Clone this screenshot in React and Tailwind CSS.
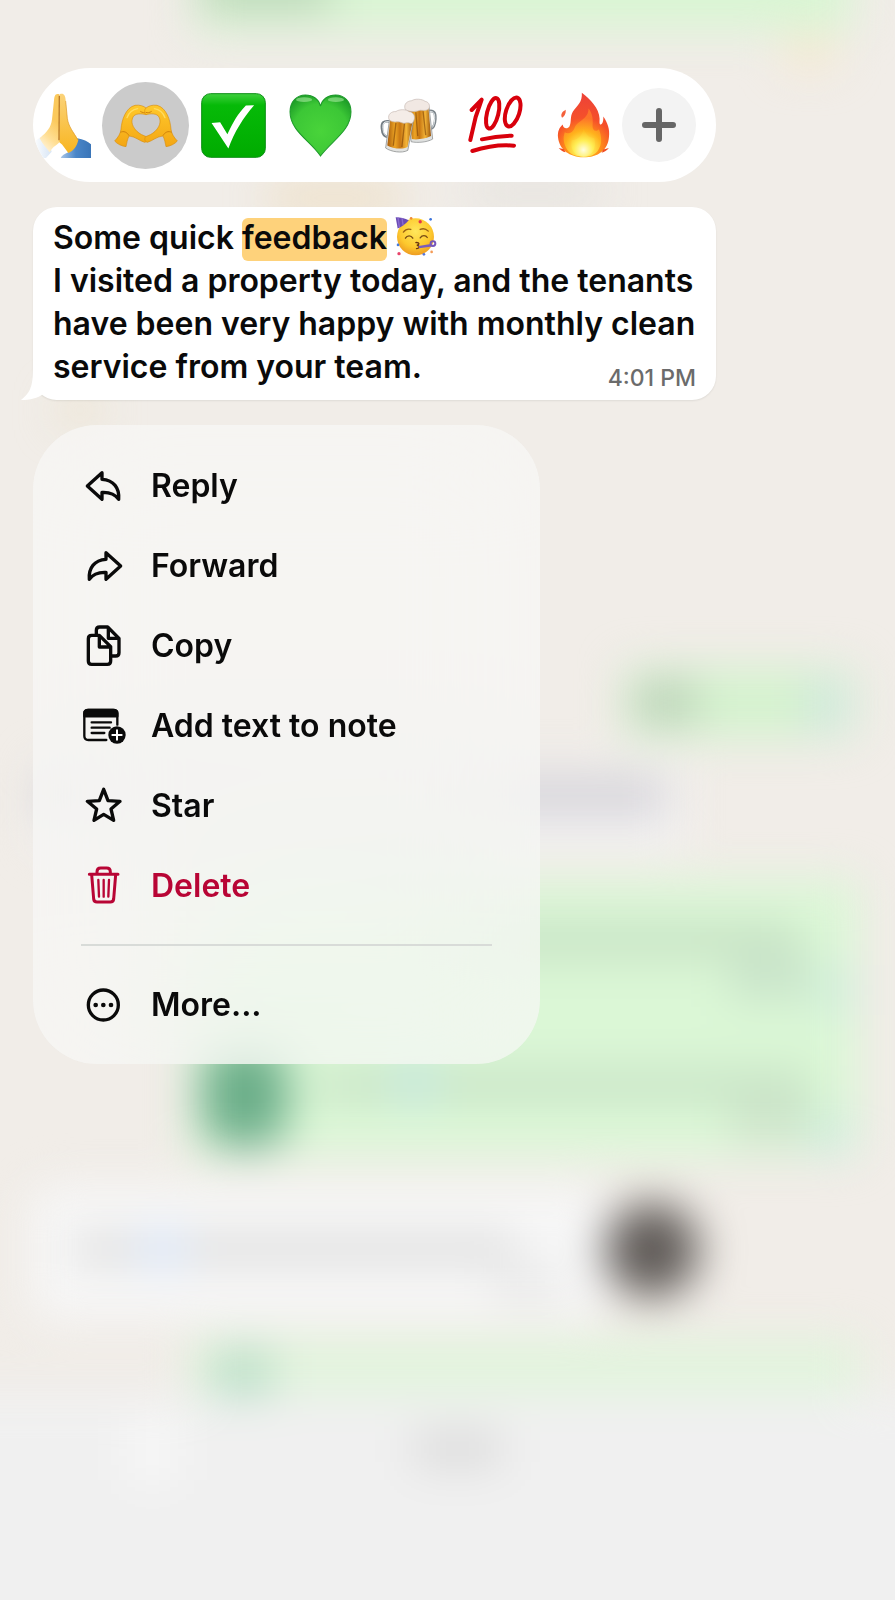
function PrayIcon() {
  return (
    <svg viewBox="39 96 174 195" className="h-[65px] w-[58px]" aria-hidden="true">
      <defs>
        <linearGradient id="praySkin" gradientUnits="userSpaceOnUse" x1="50" x2="119" y1="262" y2="190">
          <stop offset="0" stopColor="#fffaf0" />
          <stop offset="0.5" stopColor="#ffdf95" />
          <stop offset="1" stopColor="#fbc95c" />
        </linearGradient>
        <linearGradient id="praySkinRight" x1="0" x2="0" y1="0" y2="1">
          <stop offset="0" stopColor="#fbd37a" />
          <stop offset="1" stopColor="#f8b51f" />
        </linearGradient>
        <linearGradient id="praySleeve" x1="0" x2="1" y1="0" y2="0">
          <stop offset="0" stopColor="#a9c6e8" />
          <stop offset="0.5" stopColor="#4a86c8" />
          <stop offset="1" stopColor="#3a75b8" />
        </linearGradient>
        <linearGradient id="praySleeveFade" x1="0" x2="1" y1="0" y2="0">
          <stop offset="0" stopColor="#ffffff" />
          <stop offset="1" stopColor="#d7e5f5" />
        </linearGradient>
      </defs>
      <path d="M39 245 L62 228 C80 242 92 260 95 272 L78 291 L48 291 Z" fill="url(#praySleeveFade)" />
      <path d="M172 232 C190 236 203 241 213 250 V291 H122 C125 283 134 279 145 274 Z" fill="url(#praySleeve)" />
      <path d="M118 100 C106 95 103 105 102 118 L96 175 C93 200 82 212 59 232 C68 250 80 262 89 274 C99 254 112 253 119 242 Z" fill="url(#praySkin)" />
      <path d="M119 100 C131 95 136 104 137 118 L142 170 C145 195 157 208 175 236 C171 255 161 269 145 276 C137 267 130 252 118 244 Z" fill="url(#praySkinRight)" />
      <path d="M118 104 L117 238" stroke="#b97a26" strokeWidth="4" />
      <path d="M137 120 L142 172 C146 198 160 212 174 238" fill="none" stroke="#dd9a2c" strokeWidth="2" />
    </svg>
  )
}

function HeartHandsIcon() {
  const hand =
    'M283 238 C294 226 300 217 302 203 C304 175 316 138 344 131 C358 129 370 133 377 139 C383 145 382 154 377 159 C362 155 344 155 338 166 C330 182 338 197 350 209 C358 217 368 221 378 225 C383 231 381 240 373 242 C358 238 344 224 326 223 C321 233 319 245 317 255 C303 253 291 247 283 238 Z'
  return (
    <svg viewBox="281 127 192 129" className="h-[43px] w-[64px]" aria-hidden="true">
      <defs>
        <linearGradient id="handSkin" x1="0" x2="0" y1="0" y2="1">
          <stop offset="0" stopColor="#ffc92b" />
          <stop offset="1" stopColor="#f3a614" />
        </linearGradient>
      </defs>
      {['', 'translate(754 0) scale(-1 1)'].map((transform) => (
        <g key={transform} transform={transform}>
          <path d={hand} fill="url(#handSkin)" stroke="#d98f12" strokeWidth="2" />
          <path d="M320 168 C326 152 338 143 352 141" fill="none" stroke="#ffdc60" strokeWidth="4" strokeLinecap="round" />
          <path d="M300 212 C310 207 320 211 326 222 M360 149 C366 153 372 154 378 152" fill="none" stroke="#cf820c" strokeWidth="3" />
        </g>
      ))}
    </svg>
  )
}

function CheckIcon() {
  return (
    <svg viewBox="542 95 197 197" className="size-[65px]" aria-hidden="true">
      <defs>
        <linearGradient id="checkFill" x1="0" x2="0" y1="0" y2="1">
          <stop offset="0" stopColor="#3fd03e" />
          <stop offset="0.18" stopColor="#06ba08" />
          <stop offset="1" stopColor="#00ab00" />
        </linearGradient>
      </defs>
      <rect x="544" y="97" width="193" height="193" rx="27" fill="url(#checkFill)" stroke="#0b8f14" strokeWidth="3" />
      <path d="M574 186 L600 184 L622 220 C638 187 653 158 678 133 L703 132 C670 170 643 213 625 263 Z" fill="#fff" />
    </svg>
  )
}

function GreenHeartIcon() {
  return (
    <svg viewBox="808 102 188 188" className="size-[63px]" aria-hidden="true">
      <defs>
        <radialGradient id="heartFill" cx="0.5" cy="0.6" r="0.65">
          <stop offset="0" stopColor="#49d43a" />
          <stop offset="0.7" stopColor="#3cc736" />
          <stop offset="1" stopColor="#1f9f28" />
        </radialGradient>
      </defs>
      <path d="M902 287 C872 242 811 212 811 155 C811 125 831 105 857 105 C880 105 897 118 902 138 C907 118 924 105 947 105 C973 105 993 125 993 155 C993 212 934 242 902 287 Z" fill="url(#heartFill)" stroke="#1e9a2b" strokeWidth="3" />
      <ellipse cx="853" cy="119" rx="24" ry="7" fill="#a5ea9c" opacity="0.6" />
      <ellipse cx="948" cy="119" rx="24" ry="7" fill="#a5ea9c" opacity="0.6" />
    </svg>
  )
}

function BeersIcon() {
  return (
    <svg viewBox="28 112 172 166" className="h-[55px] w-[57px]" aria-hidden="true">
      <defs>
        <linearGradient id="beerFill" x1="0" x2="1" y1="0" y2="0">
          <stop offset="0" stopColor="#a85c0c" />
          <stop offset="0.3" stopColor="#eda424" />
          <stop offset="0.5" stopColor="#c87612" />
          <stop offset="0.75" stopColor="#f3b437" />
          <stop offset="1" stopColor="#9a530a" />
        </linearGradient>
      </defs>
      {/* back mug */}
      <path d="M174 152 C190 148 196 156 195 175 C194 195 190 203 180 205" fill="none" stroke="#7d868c" strokeWidth="8" />
      <path d="M174 153 C189 150 194 158 193 175 C192 193 188 202 180 204" fill="none" stroke="#e9edef" strokeWidth="3" />
      <path d="M110 142 L176 138 L187 236 C170 246 140 248 122 244 Z" fill="#dfe1e0" stroke="#7f8284" strokeWidth="2" />
      <path d="M112 142 L174 139 L182 227 C165 235 140 239 124 236 Z" fill="url(#beerFill)" />
      <path d="M136 155 L142 227 M158 152 L166 224" stroke="#7d4206" strokeWidth="4" opacity="0.6" />
      <path d="M104 147 C98 128 112 121 124 120 C134 113 156 115 164 122 C178 124 181 140 173 147 C162 153 151 146 142 151 C128 155 112 152 104 147 Z" fill="#f1e8e3" stroke="#c6b8b1" strokeWidth="2" />
      {/* front mug */}
      <path d="M58 183 C38 179 32 188 34 204 C35 221 41 229 53 229" fill="none" stroke="#747d84" strokeWidth="8" />
      <path d="M58 184 C40 181 35 189 37 204 C38 219 43 227 53 228" fill="none" stroke="#e9edef" strokeWidth="3" />
      <path d="M57 174 L129 180 L112 270 C94 280 60 274 45 263 Z" fill="#e2e3e1" stroke="#797c7d" strokeWidth="2" />
      <path d="M59 176 L127 181 L111 260 C93 269 64 263 50 255 Z" fill="url(#beerFill)" />
      <path d="M76 187 L68 256 M102 188 L94 260" stroke="#7d4206" strokeWidth="4" opacity="0.6" />
      <path d="M55 177 C50 160 64 152 76 153 C86 145 108 146 115 153 C132 155 136 172 128 184 C122 194 118 184 107 187 C98 192 90 182 80 184 C69 185 60 183 55 177 Z" fill="#f4ece7" stroke="#c6b8b1" strokeWidth="2" />
    </svg>
  )
}

function HundredIcon() {
  return (
    <svg viewBox="296 106 168 178" className="h-[60px] w-[56px]" fill="none" stroke="#d8000c" strokeLinecap="round" aria-hidden="true">
      <polyline points="307,150 337,119 319,171 303,240" strokeWidth="12" strokeLinejoin="round" />
      <ellipse cx="370" cy="160" rx="17" ry="47" strokeWidth="12" transform="rotate(14 370 160)" />
      <ellipse cx="430" cy="156" rx="20" ry="45" strokeWidth="12" transform="rotate(18 430 156)" />
      <path d="M338 238 C365 232 400 228 427 227" strokeWidth="12" />
      <path d="M309 273 C350 260 400 254 434 257" strokeWidth="12" />
    </svg>
  )
}

function FireIcon() {
  return (
    <svg viewBox="561 95 158 197" className="h-[66px] w-[53px]" aria-hidden="true">
      <defs>
        <radialGradient id="fireOuter" gradientUnits="userSpaceOnUse" cx="640" cy="262" r="150">
          <stop offset="0" stopColor="#ffd21c" />
          <stop offset="0.35" stopColor="#ff8a1a" />
          <stop offset="0.6" stopColor="#f5502a" />
          <stop offset="1" stopColor="#ee4436" />
        </radialGradient>
        <radialGradient id="fireInner" gradientUnits="userSpaceOnUse" cx="640" cy="268" r="95">
          <stop offset="0" stopColor="#fffde0" />
          <stop offset="0.3" stopColor="#ffee55" />
          <stop offset="0.6" stopColor="#ffb91d" />
          <stop offset="1" stopColor="#ff7a29" />
        </radialGradient>
      </defs>
      <path d="M635 97 C660 116 687 143 688 174 C688 185 687 192 691 192 C697 192 700 180 699 168 C712 186 719 207 716 229 C713 268 684 290 640 290 C598 290 568 267 564 231 C562 213 568 201 578 192 C578 204 592 207 598 198 C605 184 599 169 608 154 C621 135 637 126 635 97 Z" fill="url(#fireOuter)" />
      <path d="M587 148 C574 155 571 164 576 172 C583 168 588 160 587 148 Z" fill="#f4603a" />
      <path d="M566 262 C572 269 578 273 586 275 L582 266 Z M716 262 C709 270 703 274 694 276 L699 267 Z" fill="#ef4e25" />
      <path d="M655 144 C668 160 669 180 667 196 C667 212 678 215 686 206 C694 225 697 250 683 270 C673 283 659 288 640 288 C618 288 602 282 592 268 C580 250 578 232 584 215 C595 222 608 216 613 203 C620 180 655 178 655 144 Z" fill="url(#fireInner)" opacity="0.85" />
      <path d="M640 206 C650 224 655 231 672 232 C680 260 667 286 640 288 C612 287 599 262 605 238 C620 240 636 226 640 206 Z" fill="url(#fireInner)" />
    </svg>
  )
}

function PartyFace() {
  return (
    <svg viewBox="58 38 123 116" className="-mt-2 inline-block h-[39px] w-[42px] align-middle" role="img" aria-label="Partying face">
      <defs>
        <radialGradient id="partyFill" cx="0.5" cy="0.35" r="0.65">
          <stop offset="0" stopColor="#ffe75c" />
          <stop offset="0.65" stopColor="#fdc92e" />
          <stop offset="1" stopColor="#ee9c22" />
        </radialGradient>
      </defs>
      <circle cx="118" cy="97" r="55" fill="url(#partyFill)" />
      <path d="M59 39 C73 39 87 42 98 48 C90 58 77 68 65 72 Z" fill="#6b4bb5" />
      <path d="M66 40 L70 68 M78 41 L81 62" stroke="#8a6cd0" strokeWidth="4" />
      <path d="M82 83 C88 75 97 73 104 75 M132 75 C141 71 150 74 156 80" fill="none" stroke="#9a6315" strokeWidth="4" strokeLinecap="round" />
      <path d="M88 101 C93 92 105 92 110 101 M132 100 C138 91 149 92 153 99" fill="none" stroke="#7a4d14" strokeWidth="4" strokeLinecap="round" />
      <path d="M119 114 C130 113 131 120 122 122 C132 123 131 132 121 132" fill="none" stroke="#6a3610" strokeWidth="4" strokeLinecap="round" />
      <path d="M127 124 L164 118 L167 126 L129 131 Z" fill="#7a5bbd" />
      <circle cx="170" cy="117" r="7" fill="none" stroke="#7658bb" strokeWidth="6" />
      <circle cx="132" cy="52" r="5" fill="#e5354b" />
      <circle cx="163" cy="45" r="4" fill="#3c74dc" />
      <circle cx="69" cy="147" r="5" fill="#e8446b" />
      <circle cx="66" cy="121" r="4" fill="#467be0" />
      <circle cx="143" cy="149" r="4" fill="#5876d8" />
      <circle cx="166" cy="142" r="4" fill="#f49b56" />
      <circle cx="105" cy="42" r="4" fill="#f08c34" />
    </svg>
  )
}

const reactions = [
  { label: 'Heart hands', icon: <HeartHandsIcon />, selected: true },
  { label: 'Check mark', icon: <CheckIcon /> },
  { label: 'Green heart', icon: <GreenHeartIcon /> },
  { label: 'Beers', icon: <BeersIcon /> },
  { label: 'Hundred points', icon: <HundredIcon /> },
  { label: 'Fire', icon: <FireIcon /> }
]

function ReactionBar() {
  return (
    <div className="flex h-[114px] w-full max-w-[683px] items-center overflow-hidden rounded-full bg-white pr-5">
      <button type="button" aria-label="Folded hands" className="w-[69px] shrink-0">
        <PrayIcon />
      </button>
      <div className="flex min-w-0 flex-1">
        {reactions.map(({ label, icon, selected }) => (
          <div key={label} className="flex flex-1 justify-center">
            <button
              type="button"
              aria-label={label}
              aria-pressed={!!selected}
              className={`flex size-[87px] shrink-0 items-center justify-center rounded-full ${selected ? 'bg-[#cbcbcb]' : ''}`}
            >
              {icon}
            </button>
          </div>
        ))}
      </div>
      <button type="button" aria-label="More reactions" className="-ml-[5px] flex size-[74px] shrink-0 items-center justify-center rounded-full bg-[#f3f3f3]">
        <svg viewBox="0 0 36 36" className="size-9" stroke="#666" strokeWidth="6" strokeLinecap="round" aria-hidden="true">
          <path d="M18 4 V32 M4 18 H32" />
        </svg>
      </button>
    </div>
  )
}

function MessageBubble() {
  return (
    <article className="relative mt-[25px] w-full max-w-[683px] rounded-[24px] bg-white px-5 pt-[9px] pb-3 shadow-[0_1px_2px_rgba(0,0,0,0.08)]">
      <svg viewBox="0 0 36 40" className="absolute bottom-0 -left-3 h-10 w-9" fill="#fff" aria-hidden="true">
        <path d="M12 0 C12 22 12 31 0 40 C9 40 17 38 22 34 L36 40 V0 Z" />
      </svg>
      <p className="relative text-[32px] leading-[43px] font-semibold text-[#0a0a0a]">
        Some quick <mark className="rounded-md bg-[#fed27b] pb-1 text-[#0a0a0a]">feedback</mark> <PartyFace />
        <br />
        I visited a property today, and the tenants have been very happy with monthly clean service from your team.
        <time className="float-right mt-[19px] text-[23px] leading-7 font-medium text-[#6b6b6b]">4:01 PM</time>
      </p>
    </article>
  )
}

function MenuIcon({ children, strokeWidth = 10 }) {
  return (
    <svg
      viewBox="0 0 132 132"
      className="size-11 shrink-0 overflow-visible"
      fill="none"
      stroke="currentColor"
      strokeWidth={strokeWidth}
      strokeLinecap="round"
      strokeLinejoin="round"
      aria-hidden="true"
    >
      {children}
    </svg>
  )
}

const actions = [
  {
    label: 'Reply',
    icon: (
      <MenuIcon>
        <path d="M63 26 L19 66 L63 106 V85 C85 84 102 90 113 106 C116 72 98 48 63 46 Z" />
      </MenuIcon>
    )
  },
  {
    label: 'Forward',
    icon: (
      <MenuIcon>
        <path d="M75 26 L119 66 L75 106 V85 C53 84 36 90 25 106 C22 72 40 48 75 46 Z" />
      </MenuIcon>
    )
  },
  {
    label: 'Copy',
    icon: (
      <MenuIcon>
        <path d="M46 32 V19 Q46 9 56 9 H80 L114 43 V86 Q114 96 104 96 H92 M82 11 V43 H112" />
        <path d="M32 34 H55 L89 68 V111 Q89 121 79 121 H32 Q22 121 22 111 V44 Q22 34 32 34 Z M55 36 V69 H87" />
      </MenuIcon>
    )
  },
  {
    label: 'Add text to note',
    icon: (
      <MenuIcon strokeWidth={7}>
        <path d="M76 108 H22 Q10 108 10 96 V28 Q10 18 22 18 H97 Q109 18 109 28 V62" />
        <path d="M10 37 V28 Q10 18 22 18 H97 Q109 18 109 28 V37 Z" fill="currentColor" />
        <path d="M32 55 H90 M32 71 H86 M32 87 H70" />
        <circle cx="108" cy="93" r="26" fill="currentColor" stroke="none" />
        <path d="M108 79 V107 M94 93 H122" stroke="#fff" strokeWidth="6" />
      </MenuIcon>
    )
  },
  {
    label: 'Star',
    icon: (
      <MenuIcon>
        <path d="M68 16 L81 50 L117 52 L90 75 L98 109 L68 91 L39 109 L47 75 L19 52 L55 50 Z" />
      </MenuIcon>
    )
  },
  {
    label: 'Delete',
    danger: true,
    icon: (
      <MenuIcon strokeWidth={9}>
        <path d="M25 31 H111 M48 30 V23 Q48 12 59 12 H77 Q88 12 88 23 V30" />
        <path d="M32 32 L38 105 Q39 114 48 114 H88 Q97 114 98 105 L104 32" />
        <path d="M52 48 L54 98 M68 48 V98 M84 48 L82 98" strokeWidth="7" />
      </MenuIcon>
    )
  }
]

function MenuItem({ icon, label, danger }) {
  return (
    <button
      type="button"
      className={`flex h-20 w-full items-center gap-[26px] text-left text-[32px] font-semibold ${danger ? 'text-[#b80535]' : 'text-[#0a0a0a]'}`}
    >
      {icon}
      {label}
    </button>
  )
}

function ContextMenu() {
  return (
    <nav className="mt-[25px] w-full max-w-[507px] rounded-[64px] bg-[#f8f8f7]/70 px-12 pt-[21px] pb-[19px] backdrop-blur-3xl">
      {actions.map((action) => (
        <MenuItem key={action.label} {...action} />
      ))}
      <hr className="mt-[18px] mb-[19px] border-t-2 border-[#d8dbd8]" />
      <MenuItem
        label="More..."
        icon={
          <MenuIcon>
            <circle cx="67" cy="66" r="45" />
            <g fill="currentColor" stroke="none">
              <circle cx="44" cy="66" r="7" />
              <circle cx="67" cy="66" r="7" />
              <circle cx="90" cy="66" r="7" />
            </g>
          </MenuIcon>
        }
      />
    </nav>
  )
}

// Out-of-focus conversation behind the menu
function ChatBackdrop() {
  return (
    <svg viewBox="0 0 895 1600" preserveAspectRatio="none" className="absolute inset-0 h-full w-full" aria-hidden="true">
      <defs>
        <filter id="soft" x="-100" y="-100" width="1095" height="1800" filterUnits="userSpaceOnUse" colorInterpolationFilters="sRGB">
          <feGaussianBlur stdDeviation="22" />
        </filter>
      </defs>
      <rect width="895" height="1600" fill="#f1ede8" />
      <g filter="url(#soft)">
        <rect x="195" y="-60" width="658" height="90" fill="#d9f5d3" />
        <rect x="200" y="-40" width="130" height="52" fill="#bcd9b9" />
        <rect x="785" y="40" width="50" height="25" fill="#f8e8c8" />
        <rect x="270" y="190" width="130" height="16" fill="#ecd4a8" />
        <rect x="470" y="180" width="130" height="20" fill="#dfdeda" />
        <rect x="60" y="400" width="40" height="20" fill="#eadfc4" />
        <rect x="40" y="765" width="640" height="80" fill="#f4f4f5" />
        <rect x="40" y="775" width="625" height="42" fill="#d5d3d8" />
        <rect x="625" y="668" width="230" height="70" fill="#d4f2ce" />
        <rect x="635" y="682" width="60" height="40" fill="#b9cfb6" />
        <rect x="810" y="680" width="35" height="50" fill="#cfe6e1" />
        <rect x="190" y="880" width="668" height="275" fill="#dbf7d6" />
        <rect x="400" y="920" width="400" height="40" fill="#c9e4c6" />
        <rect x="730" y="950" width="80" height="50" fill="#c9e4ca" />
        <rect x="820" y="965" width="28" height="50" fill="#ccebdb" />
        <rect x="320" y="1068" width="490" height="34" fill="#c9e4c7" />
        <rect x="395" y="1060" width="40" height="42" fill="#c4e6e0" />
        <rect x="730" y="1100" width="80" height="42" fill="#cde4ca" />
        <rect x="815" y="1115" width="30" height="38" fill="#c9eadf" />
        <rect x="202" y="1042" width="86" height="105" rx="32" fill="#6bae89" />
        <rect x="30" y="1185" width="580" height="135" rx="25" fill="#f6f6f6" />
        <rect x="75" y="1234" width="440" height="30" fill="#dfdfdf" />
        <rect x="140" y="1230" width="45" height="38" fill="#dce8fb" />
        <rect x="495" y="1275" width="65" height="20" fill="#e0e0e0" />
        <circle cx="652" cy="1250" r="47" fill="#5f5a57" />
        <rect x="-80" y="1392" width="1060" height="300" fill="#f0f0f0" />
        <rect x="190" y="1340" width="670" height="54" fill="#e1f4dc" />
        <rect x="212" y="1350" width="60" height="46" fill="#b9dfc6" />
        <rect x="130" y="1420" width="45" height="60" fill="#f8f8f8" />
        <rect x="415" y="1432" width="85" height="34" fill="#dadada" />
      </g>
    </svg>
  )
}

export default function App() {
  return (
    <main className="relative min-h-screen overflow-hidden bg-[#f1ede8] font-['Inter',sans-serif]">
      <ChatBackdrop />
      <div className="relative px-[33px] pt-[68px] pb-16">
        <ReactionBar />
        <MessageBubble />
        <ContextMenu />
      </div>
    </main>
  )
}
